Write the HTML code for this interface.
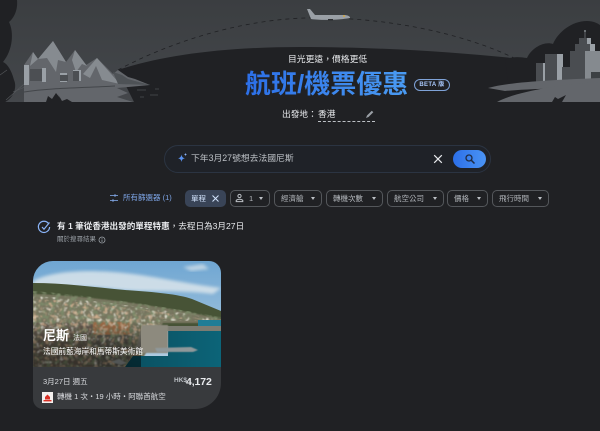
<!DOCTYPE html>
<html lang="zh-Hant">
<head>
<meta charset="utf-8">
<style>
html,body{margin:0;padding:0;background:#202124;}
body{width:600px;height:431px;overflow:hidden;position:relative;font-family:"Liberation Sans","Noto Sans CJK TC",sans-serif;color:#e8eaed;}
.t{position:absolute;white-space:nowrap;line-height:1;}
.chip{position:absolute;top:190px;height:17px;box-sizing:border-box;border:1px solid #54575b;border-radius:5px;font-size:7.5px;color:#b4b8bd;line-height:15px;padding-left:6px;white-space:nowrap;}
.chip:after{content:"";position:absolute;right:6px;top:6px;border-left:2.5px solid transparent;border-right:2.5px solid transparent;border-top:3px solid #bdc1c6;}
</style>
</head>
<body>
<svg style="position:absolute;left:0;top:0" width="600" height="110" viewBox="0 0 600 110">
  <defs><linearGradient id="sky" x1="0" y1="0" x2="0" y2="1"><stop offset="0" stop-color="#3b3e41"/><stop offset="1" stop-color="#44474b"/></linearGradient></defs>
  <path d="M0 0H600V68C520 58 420 47 300 47C220 47 160 56 118 70L134 102H0Z" fill="url(#sky)"/>
  <path d="M118 70C170 42 240 20 305 18C380 16 460 32 514 58" fill="none" stroke="#202124" stroke-width=".8" stroke-dasharray="4 4"/>
  <!-- left tree -->
  <path d="M0 0H17C18 10 14 18 9 22C14 32 13 50 3 62C8 64 12 72 14 80C17 86 15 100 0 104Z" fill="#202124"/>
  <path d="M0 75L7 70M6 100L24 84M13 92L25 87" stroke="#55585c" stroke-width=".6" fill="none"/>
  <!-- left mountains -->
  <path d="M24 85V65L33 52L38 59L53 41L66 62L75 50L86 65L97 58L113 74L118 70L128 77L135 79L150 85L117 88L128 93L117 97L133 102H24Z" fill="#63666b"/>
  <path d="M38 59L53 41L66 62L58 60L56 72L47 58ZM75 50L87 66L82 64L76 72L72 60ZM97 58L120 84L102 80L96 66L90 78L83 74Z" fill="#868b90"/>
  <path d="M33 52L38 59L30 66Z" fill="#868b90"/>
  <path d="M113 72L122 75L128 79L135 81L150 85L118 84Z" fill="#4e5256"/>
  <path d="M24 65H29V85H24ZM42 68H46V82H42ZM60 73H67V82H60ZM73 70H81V81H73Z" fill="#9aa0a6"/>
  <path d="M30 69H42V81H30ZM60 75H68V81H60ZM73 71H79V81H73Z" fill="#4c4f53"/>
  <path d="M24 92C50 88 80 88 115 86" stroke="#43464a" fill="none"/>
  <path d="M46 102L48 96L52 99L56 93L60 98L58 94L62 101L67 99L72 102Z" fill="#202124"/>
  <path d="M137 90h9M150 95h8M140 97h4M155 89h4" stroke="#4a4d51" stroke-width=".7"/>
  <!-- right trees and city -->
  <path d="M505 60C512 56 520 57 527 58C532 47 545 41 553 44C558 32 572 21 587 21C593 21 597 23 600 25V96H510Z" fill="#202124"/>
  <path d="M536 63H543V86H536Z" fill="#4a4d51"/>
  <path d="M543 63H547V86H543Z" fill="#9aa0a6"/>
  <path d="M545 54H557V86H545Z" fill="#4a4d51"/>
  <path d="M557 54H563V86H557Z" fill="#9aa0a6"/>
  <path d="M562 67H570V88H562Z" fill="#4a4d51"/>
  <path d="M570 67H575V88H570Z" fill="#9aa0a6"/>
  <path d="M570 51H585V86H570Z" fill="#4a4d51"/>
  <path d="M585 51H600V86H585Z" fill="#858a8f"/>
  <path d="M575 44H590V51H575ZM579 38H587V44H579Z" fill="#4a4d51"/>
  <path d="M590 44H595V51H590ZM587 38H591V44H587Z" fill="#9aa0a6"/>
  <path d="M585 30V38" stroke="#5f6368"/>
  <circle cx="585" cy="31" r="1" fill="#80868b"/>
  <path d="M591 72H600V82H591Z" fill="#3c4043"/>
  <path d="M488 88C510 82 550 80 600 78V90C570 88 540 88 505 91Z" fill="#63666b"/>
  <path d="M497 102C515 92 560 84 600 82V102Z" fill="#63666b"/>
  <path d="M552 102L555 97L558 99L566 95L562 102Z" fill="#202124"/>
  <!-- plane -->
  <path d="M307 9L310 9L315 15L345 15C349 15.5 350.5 17 350 18C341 20 320 20.5 311 19Z" fill="#9aa0a6"/>
  <path d="M328 19h5v1.5h-5z" fill="#2c2e31"/><circle cx="344" cy="16" r=".8" fill="#f9ab00"/>
</svg>

<div class="t" style="left:288px;top:55px;font-size:8.8px;color:#e8eaed;">目光更遠，價格更低</div>
<div class="t" style="left:245px;top:69px;font-size:26px;font-weight:700;background:linear-gradient(90deg,#2c6fe8,#4a9bf2);-webkit-background-clip:text;background-clip:text;color:transparent;line-height:30px;">航班/機票優惠</div>
<div class="t" style="left:414px;top:79px;width:36px;height:12px;box-sizing:border-box;border:1px solid #7fa3d8;border-radius:6px;font-size:6px;font-weight:700;color:#a8c7fa;text-align:center;line-height:10px;letter-spacing:.3px;">BETA 版</div>
<div class="t" style="left:282px;top:110px;font-size:8.7px;color:#e8eaed;">出發地：</div>
<div class="t" style="left:318px;top:110px;font-size:8.7px;color:#e8eaed;">香港</div>
<div style="position:absolute;left:318px;top:121px;width:57px;border-top:1px dashed #bdc1c6;"></div>
<svg style="position:absolute;left:364px;top:109px" width="11" height="11" viewBox="0 0 11 11"><path d="M2 9L3 6.5L7.8 1.7L9.3 3.2L4.5 8Z" fill="#9aa0a6"/></svg>

<!-- search -->
<div style="position:absolute;left:164px;top:145px;width:327px;height:28px;box-sizing:border-box;background:#1f2228;border:1px solid #2b3442;border-radius:14px;"></div>
<svg style="position:absolute;left:177px;top:152px" width="11" height="11" viewBox="0 0 11 11"><path d="M4.5 2.5C5 5 5.6 5.8 8 6.3C5.6 6.8 5 7.6 4.5 10C4 7.6 3.2 6.8 1 6.3C3.2 5.8 4 5 4.5 2.5Z" fill="#5b93f0"/><path d="M8.5 .8C8.7 2 9 2.2 10 2.5C9 2.8 8.7 3 8.5 4.2C8.3 3 8 2.8 7 2.5C8 2.2 8.3 2 8.5 .8Z" fill="#8ab4f8"/></svg>
<div class="t" style="left:191px;top:154px;font-size:8.8px;color:#bdc1c6;">下年3月27號想去法國尼斯</div>
<svg style="position:absolute;left:432px;top:153px" width="12" height="12" viewBox="0 0 12 12"><path d="M2.2 2.2L9.8 9.8M9.8 2.2L2.2 9.8" stroke="#e8eaed" stroke-width="1.2"/></svg>
<div style="position:absolute;left:453px;top:150px;width:33px;height:18px;border-radius:9px;background:linear-gradient(90deg,#2c6fe8,#4a94f5);"></div>
<svg style="position:absolute;left:464px;top:153px" width="12" height="12" viewBox="0 0 12 12"><circle cx="5" cy="5" r="3" fill="none" stroke="#1f2c44" stroke-width="1.3"/><path d="M7.2 7.2L10.5 10.5" stroke="#1f2c44" stroke-width="1.5"/></svg>

<!-- filters -->
<svg style="position:absolute;left:109px;top:193px" width="10" height="10" viewBox="0 0 10 10"><path d="M1 2.5H9M1 7.5H9" stroke="#8ab4f8" stroke-width="1" opacity=".75"/><path d="M6 1V4M4 6V9" stroke="#8ab4f8" stroke-width="1" opacity=".75"/></svg>
<div class="t" style="left:123px;top:194px;font-size:7.5px;color:#7ea6e8;">所有篩選器 (1)</div>
<div class="t" style="left:185px;top:190px;width:41px;height:17px;border-radius:5px;background:#394457;font-size:7.5px;line-height:17px;color:#d2e3fc;padding-left:6px;box-sizing:border-box;">單程</div>
<svg style="position:absolute;left:211px;top:194px" width="9" height="9" viewBox="0 0 9 9"><path d="M1.5 1.5L7.5 7.5M7.5 1.5L1.5 7.5" stroke="#d2e3fc" stroke-width="1"/></svg>
<div class="chip" style="left:230px;width:40px;padding-left:18px;">1</div>
<svg style="position:absolute;left:235px;top:193px" width="9" height="10" viewBox="0 0 9 10"><circle cx="4.5" cy="3" r="1.6" fill="none" stroke="#bdc1c6"/><path d="M1.2 8.6V7.4C2.5 5.8 6.5 5.8 7.8 7.4V8.6Z" fill="none" stroke="#bdc1c6"/></svg>
<div class="chip" style="left:274px;width:48px;">經濟艙</div>
<div class="chip" style="left:326px;width:57px;">轉機次數</div>
<div class="chip" style="left:387px;width:57px;">航空公司</div>
<div class="chip" style="left:447px;width:41px;">價格</div>
<div class="chip" style="left:492px;width:57px;">飛行時間</div>

<!-- deal headline -->
<svg style="position:absolute;left:37px;top:220px" width="14" height="14" viewBox="0 0 14 14"><path d="M11.5 3.5A5.6 5.6 0 1 0 12.6 7" fill="none" stroke="#8ab4f8" stroke-width="1.2"/><path d="M5 7L7 9.2L12.5 2.5" fill="none" stroke="#8ab4f8" stroke-width="1.2"/></svg>
<div class="t" style="left:57px;top:222px;font-size:8.6px;font-weight:700;color:#e8eaed;">有 1 筆從香港出發的單程特惠<span style="font-weight:400">，去程日為3月27日</span></div>
<div class="t" style="left:57px;top:237px;font-size:6.5px;color:#9aa0a6;">關於搜尋結果</div>
<svg style="position:absolute;left:98px;top:236px" width="8" height="8" viewBox="0 0 8 8"><circle cx="4" cy="4" r="3" fill="none" stroke="#9aa0a6" stroke-width=".8"/><path d="M4 3.5V6M4 2V2.8" stroke="#9aa0a6" stroke-width=".8"/></svg>

<!-- card -->
<div style="position:absolute;left:33px;top:261px;width:188px;height:148px;background:#383a3d;border-radius:20px 12px 26px 10px;overflow:hidden;">
<svg width="188" height="106" viewBox="0 0 188 106" style="display:block">
  <defs>
    <linearGradient id="s2" x1="0" y1="0" x2="0" y2="1"><stop offset="0" stop-color="#6fa6d2"/><stop offset="1" stop-color="#b5cfe2"/></linearGradient>
    <linearGradient id="w" x1="0" y1="0" x2="1" y2="0"><stop offset="0" stop-color="#0a4f60"/><stop offset="1" stop-color="#0c6478"/></linearGradient>
    <linearGradient id="fade" x1="0" y1="0" x2="0" y2="1"><stop offset="0" stop-color="#000" stop-opacity="0"/><stop offset=".5" stop-color="#000" stop-opacity=".42"/><stop offset="1" stop-color="#000" stop-opacity=".5"/></linearGradient>
    <filter id="b1"><feGaussianBlur stdDeviation="1.6"/></filter>
    <filter id="b2"><feGaussianBlur stdDeviation=".6"/></filter>
    <filter id="nDark" x="0" y="0" width="100%" height="100%">
      <feTurbulence type="fractalNoise" baseFrequency=".22" numOctaves="2" seed="3"/>
      <feColorMatrix type="matrix" values="0 0 0 0 .2  0 0 0 0 .25  0 0 0 0 .14  4 0 0 0 -1.8"/>
      <feGaussianBlur stdDeviation=".4"/>
      <feComposite in2="SourceGraphic" operator="in"/>
    </filter>
    <filter id="nLight" x="0" y="0" width="100%" height="100%">
      <feTurbulence type="fractalNoise" baseFrequency=".26" numOctaves="2" seed="11"/>
      <feColorMatrix type="matrix" values="0 0 0 0 .82  0 0 0 0 .79  0 0 0 0 .7  0 3.5 0 0 -1.9"/>
      <feGaussianBlur stdDeviation=".4"/>
      <feComposite in2="SourceGraphic" operator="in"/>
    </filter>
    <filter id="nOr" x="0" y="0" width="100%" height="100%">
      <feTurbulence type="fractalNoise" baseFrequency=".24" numOctaves="2" seed="21"/>
      <feColorMatrix type="matrix" values="0 0 0 0 .62  0 0 0 0 .42  0 0 0 0 .27  0 0 4 0 -2.1"/>
      <feGaussianBlur stdDeviation=".4"/>
      <feComposite in2="SourceGraphic" operator="in"/>
    </filter>
  </defs>
  <rect width="188" height="106" fill="url(#s2)"/>
  <path d="M0 20C20 9 60 8 100 13C130 17 150 22 188 27L180 33C140 28 110 32 80 28C50 24 20 26 0 30Z" fill="#e0e8ec" opacity=".8" filter="url(#b1)"/>
  <path d="M150 6L170 3L176 8L158 10Z" fill="#dde6ec" opacity=".7" filter="url(#b1)"/>
  <!-- hills -->
  <path d="M0 22C30 22 60 26 92 29C120 31 145 33 159 38L188 50V66H0Z" fill="#475336"/>
  <!-- town -->
  <path d="M0 33C40 34 90 40 125 46C150 50 170 54 188 58V62H130L105 106H0Z" fill="#77755f" filter="url(#b2)"/>
  <path d="M0 62H60V106H0Z" fill="#6a5f52" filter="url(#b2)"/>
  <path d="M60 61H97V74H60Z" fill="#a5704a" filter="url(#b2)"/>
  <path d="M60 74H100V106H60Z" fill="#5f5c52" filter="url(#b2)"/>
  <!-- mottled texture -->
  <path d="M0 30C40 33 100 40 188 56V60H130L100 106H0Z" fill="#000" filter="url(#nDark)"/>
  <path d="M0 35C40 37 100 44 188 58V60H130L100 106H0Z" fill="#000" filter="url(#nLight)"/>
  <path d="M0 38C40 40 100 46 170 58H130L100 106H0Z" fill="#000" filter="url(#nOr)"/>
  <!-- water and quay -->
  <rect x="165" y="59" width="23" height="7" fill="#1f7d96"/>
  <rect x="130" y="65" width="58" height="5" fill="#7c7c72"/>
  <path d="M135 70H188V106H92L100 95H135Z" fill="url(#w)"/>
  <path d="M109 64H135V92H102Z" fill="#8d8a7e" filter="url(#b2)"/>
  <path d="M122 87L158 86L165 89L160 91L124 91Z" fill="#8f989a" filter="url(#b2)"/>
  <path d="M78 101L86 98L94 102L88 104Z" fill="#9fa5a5" filter="url(#b2)"/>
  <rect y="58" width="108" height="48" fill="url(#fade)"/>
</svg>
</div>
<div class="t" style="left:43px;top:329px;font-size:13px;font-weight:700;color:#fff;">尼斯</div>
<div class="t" style="left:73px;top:335px;font-size:7px;color:#e8eaed;">法國</div>
<div class="t" style="left:43px;top:348px;font-size:7.7px;color:#fff;">法國前藍海岸和馬蒂斯美術館</div>
<div class="t" style="left:43px;top:378px;font-size:7.5px;color:#dadce0;">3月27日 週五</div>
<div class="t" style="left:174px;top:378px;font-size:6.5px;font-weight:700;color:#bdc1c6;">HK$</div>
<div class="t" style="left:186px;top:377px;font-size:10.5px;font-weight:700;color:#e8eaed;letter-spacing:-.1px;">4,172</div>
<svg style="position:absolute;left:42px;top:392px" width="11" height="11" viewBox="0 0 11 11"><rect width="11" height="11" fill="#f4f0ee"/><path d="M3 7.5V5L5.5 2.5L8 5V7.5Z" fill="#d93025"/><rect x="1.5" y="8" width="8" height="1.4" fill="#d93025"/></svg>
<div class="t" style="left:57px;top:393px;font-size:7.5px;color:#dadce0;">轉機 1 次・19 小時・阿聯酋航空</div>
</body>
</html>
